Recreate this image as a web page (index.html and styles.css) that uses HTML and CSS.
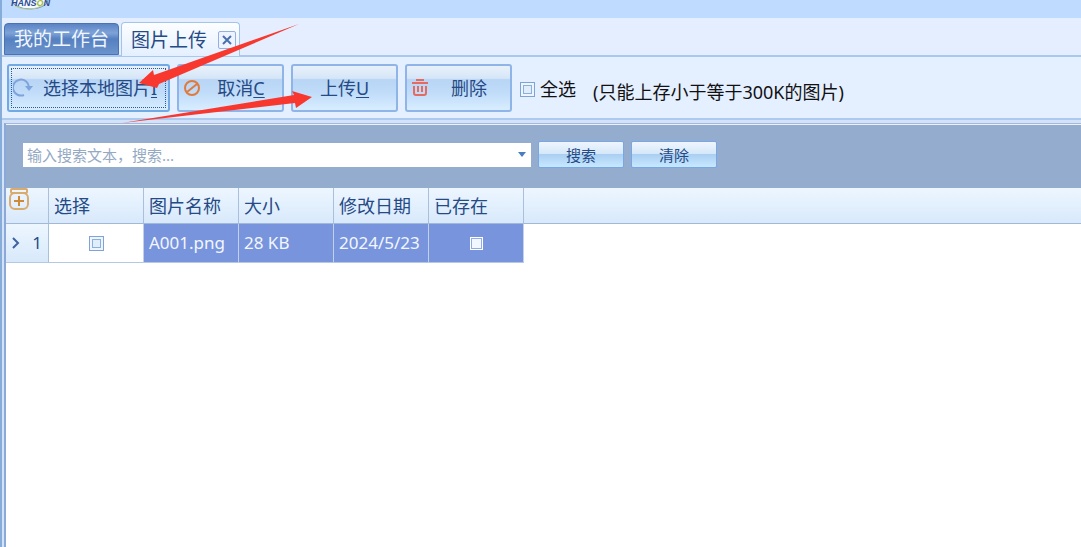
FILE: index.html
```html
<!DOCTYPE html>
<html lang="zh-CN">
<head>
<meta charset="UTF-8">
<meta name="viewport" content="width=device-width, initial-scale=1">
<title>图片上传</title>
<link rel="stylesheet" href="styles.css">
</head>
<body>
<div class="window">
  <header class="titlebar">
    <svg class="logo" width="48" height="18" viewBox="0 0 48 18" role="img" aria-label="HANSON">
      <ellipse cx="24" cy="0" rx="18" ry="9" fill="#f4f9ff" stroke="#6f93a8" stroke-width="1"/>
      <path d="M9 6q13 7 29-1" fill="none" stroke="#b9cf9a" stroke-width="1"/>
      <text x="5" y="6" class="logo-text">HANS<tspan fill="#a3b93c">O</tspan>N</text>
    </svg>
  </header>

  <nav class="tabs">
    <button class="tab" type="button">我的工作台</button>
    <div class="tab active">
      <span>图片上传</span>
      <button class="tab-close" type="button" aria-label="关闭">
        <svg width="10" height="10" viewBox="0 0 10 10"><path d="M1 1l8 8M9 1L1 9" fill="none" stroke="#4a6fae" stroke-width="2"/></svg>
      </button>
    </div>
  </nav>

  <div class="toolbar">
    <button class="tool wide" type="button">
      <svg class="tool-icon" width="20" height="20" viewBox="0 0 20 20" fill="none" stroke="#7fa3dc" stroke-width="2">
        <path d="M11 17A8 8 0 1 1 16 9"/><path d="M12 8h8l-4 5z" fill="#7fa3dc" stroke="none"/>
      </svg>
      <span>选择本地图片<u>I</u></span>
    </button>
    <button class="tool" type="button">
      <svg class="tool-icon" width="18" height="18" viewBox="0 0 18 18" fill="none" stroke="#e07a3c" stroke-width="2">
        <circle cx="9" cy="9" r="7"/><path d="M4 13L14 5"/>
      </svg>
      <span>取消<u>C</u></span>
    </button>
    <button class="tool" type="button"><span>上传<u>U</u></span></button>
    <button class="tool" type="button">
      <svg class="tool-icon" width="18" height="18" viewBox="0 0 18 18" fill="none" stroke="#e56a60" stroke-width="2">
        <path d="M1 4h16M5 1h8M3 7v7q0 2 2 2h8q2 0 2-2V7M7 7v6M11 7v6"/>
      </svg>
      <span>删除</span>
    </button>
    <label class="check-all"><input type="checkbox">全选</label>
    <span class="hint">(只能上存小于等于300K的图片)</span>
  </div>

  <main class="panel">
    <form class="search">
      <div class="combo">
        <input type="text" placeholder="输入搜索文本，搜索..." aria-label="搜索文本">
        <button type="button" aria-label="展开"><svg width="8" height="5" viewBox="0 0 8 5"><path d="M0 0h8L4 5z" fill="#4a7cc0"/></svg></button>
      </div>
      <button class="small" type="button">搜索</button>
      <button class="small" type="button">清除</button>
    </form>

    <table class="grid">
      <colgroup>
        <col class="col-no"><col class="col"><col class="col"><col class="col"><col class="col"><col class="col"><col>
      </colgroup>
      <thead>
        <tr>
          <th class="corner">
            <svg width="22" height="23" viewBox="0 0 22 23" fill="none" stroke="#d9ab6c" stroke-width="2">
              <rect x="3" y="1" width="16" height="4" rx="1"/><rect x="2" y="5" width="18" height="16" rx="5"/>
              <path d="M6 13h10M11 8v10" stroke="#d08a35"/>
            </svg>
          </th>
          <th>选择</th>
          <th>图片名称</th>
          <th>大小</th>
          <th>修改日期</th>
          <th>已存在</th>
          <th class="filler"></th>
        </tr>
      </thead>
      <tbody>
        <tr>
          <td class="row-no">
            <div>
              <svg width="8" height="12" viewBox="0 0 8 12"><path d="M1 1l5 5-5 5" fill="none" stroke="#3f62a0" stroke-width="2"/></svg>
              <span>1</span>
            </div>
          </td>
          <td><input type="checkbox" aria-label="选择"></td>
          <td class="selected">A001.png</td>
          <td class="selected">28 KB</td>
          <td class="selected">2024/5/23</td>
          <td class="selected"><input class="light" type="checkbox" aria-label="已存在"></td>
          <td class="filler"></td>
        </tr>
      </tbody>
    </table>
  </main>

  <!-- arrows pointing at the two steps -->
  <svg class="arrows" width="320" height="130" viewBox="0 0 320 130" fill="#f8382f">
    <path d="M299 24L159 84 157 88 139 83 153 70 154 75z"/>
    <path d="M122 123L294 95 292 91 312 97 296 108 295 103z"/>
  </svg>
</div>
</body>
</html>
```
FILE: styles.css
```css
* { box-sizing: border-box; }
body { margin: 0; font-family: "Noto Sans", "Noto Sans CJK SC", sans-serif; font-size: 18px; line-height: 24px; color: #254a85; background: #fff; }
button, input { font: inherit; color: inherit; }
button { padding: 0; cursor: pointer; }

.window { position: relative; display: flex; flex-direction: column; min-height: 100vh; border-left: 2px solid #86add9; background: #d3e2f7; overflow: hidden; }
.titlebar { height: 18px; padding-left: 4px; background: #bfdbff; }
.logo { display: block; }
.logo-text { font: italic bold 9px "Liberation Sans", sans-serif; fill: #2c4c92; }

.tabs { display: flex; align-items: flex-end; gap: 2px; height: 39px; padding-left: 2px; background: #e4eeff; border-bottom: 2px solid #a9c8ec; }
.tab { height: 32px; padding: 0 9px; font-size: 19px; line-height: 30px; border: 1px solid #4a72b4; border-radius: 4px 4px 0 0; background: linear-gradient(#5c84c4, #7ea3d8 30%, #5580c0 50%, #6c94cc); color: #f0f6ff; }
.tab.active { display: flex; align-items: center; gap: 11px; height: 34px; padding: 0 3px 0 9px; margin-bottom: -1px; border-color: #a3c4ea; border-bottom: 0; background: linear-gradient(#fcfeff, #e4efff); color: #254a85; }
.tab-close { display: flex; align-items: center; justify-content: center; width: 18px; height: 18px; border: 1px solid #93b1dc; border-radius: 2px; background: #edf4ff; }

.toolbar { display: flex; align-items: center; gap: 7px; height: 63px; padding: 0 5px; background: #e4efff; border-bottom: 2px solid #acc9f0; }
.tool { display: flex; align-items: center; gap: 3px; width: 107px; height: 48px; padding: 0 4px; border: 2px solid #8fb5e8; border-radius: 3px; background: linear-gradient(#e8f1fa, #d6e6f8 28%, #b8d5f5 31%, #c0dcf9 60%, #d8edff); }
.tool span { flex: 1; text-align: center; }
.tool u { text-underline-offset: 2px; text-decoration-thickness: 1px; }
.tool.wide { width: 163px; border-color: #70a9e4; outline: 1px dotted #2c5a94; outline-offset: -5px; }
.tool-icon { flex: none; }
.check-all { display: flex; align-items: center; gap: 5px; margin-left: 1px; padding-top: 3px; color: #111; }
.hint { margin-left: 10px; padding-top: 8px; color: #111; }

input[type="checkbox"] { appearance: none; width: 15px; height: 15px; margin: 0; border: 1px solid #7fa3d6; background: #b9d1f0; box-shadow: inset 0 0 0 2px #edf5ff, inset 0 0 0 3px #8cafde, inset 0 0 0 8px #e0edfb; }
input[type="checkbox"]:checked { background: #2c5a94; box-shadow: inset 0 0 0 3px #edf5ff; }
input[type="checkbox"].light { width: 13px; height: 13px; border-color: #fff; background: #f2f8ff; box-shadow: inset 0 0 0 1px #93aae6; }

.panel { flex: 1; margin: 3px 0 0 2px; border-top: 1px solid #a5b6d8; border-left: 2px solid #8aa9d8; background: #fff; }
.search { display: flex; align-items: center; gap: 7px; height: 64px; padding: 0 17px 4px; border-top: 1px solid #eaf2ff; background: #94acce; font-size: 15px; }
.combo { display: flex; flex: 0 1 508px; height: 24px; background: #fff; }
.combo input { flex: 1; min-width: 0; height: 24px; padding: 0 4px; border: 0; background: none; outline: 0; }
.combo input::placeholder { color: #94a9c4; }
.combo button { display: flex; align-items: center; justify-content: center; width: 18px; border: 0; background: none; }
.small { width: 86px; height: 27px; line-height: 22px; border: 1px solid #78a7e6; border-radius: 2px; background: linear-gradient(#eef6ff, #d5e7f8 48%, #aacff2 50%, #c8e8ff); }

.grid { width: 100%; table-layout: fixed; border-collapse: separate; border-spacing: 0; }
.col-no { width: 43px; }
.col { width: 95px; }
.grid th { height: 36px; padding: 0 5px; font-weight: normal; text-align: left; white-space: nowrap; border-right: 1px solid #a9bfdc; border-bottom: 1px solid #a2b8da; background: linear-gradient(#edf6ff, #d8e9fb); }
.grid .corner { padding: 0 2px; vertical-align: top; }
.corner svg { display: block; }
.grid td { height: 39px; padding: 0 5px; font-size: 17px; white-space: nowrap; border-right: 1px solid #c2d0ea; border-bottom: 1px solid #b4c8e4; }
.grid .row-no { padding: 0 6px; border-right-color: #a9bfdc; background: linear-gradient(#edf6ff, #d8e9fb); }
.row-no div { display: flex; align-items: center; justify-content: space-between; }
.grid .selected { background: #7894dc; color: #f2f7ff; }
.grid td input[type="checkbox"] { display: block; margin: 0 auto; }
.grid .filler { border-right: 0; }
.grid td.filler { border-bottom: 0; }

.arrows { position: absolute; top: 0; left: -2px; pointer-events: none; }
```
